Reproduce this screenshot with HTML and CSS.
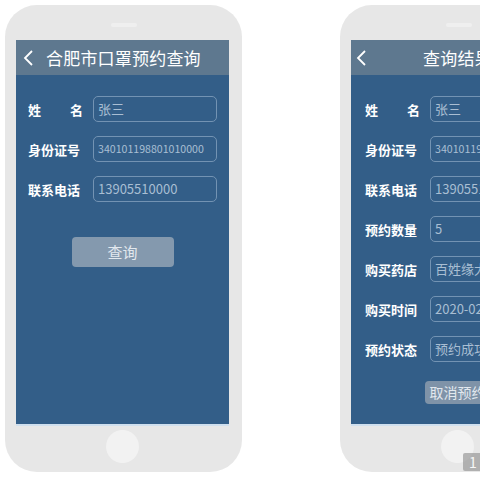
FILE: index.html
```html
<!DOCTYPE html>
<html lang="zh">
<head>
<meta charset="utf-8">
<link rel="stylesheet" href="styles.css">
</head>
<body>
<div class="stage">
  <div class="phone phone-a">
    <div class="speaker"></div>
    <div class="screen">
      <div class="header">
        <svg class="back" width="12" height="18" viewBox="0 0 12 18"><polyline points="9,2 2,9 9,16" fill="none" stroke="#fff" stroke-width="1.8"/></svg>
        <span class="title">合肥市口罩预约查询</span>
      </div>
      <div class="form">
        <div class="row"><span class="label spaced">姓<span class="gap"></span>名</span><span class="field">张三</span></div>
        <div class="row"><span class="label">身份证号</span><span class="field small">340101198801010000</span></div>
        <div class="row"><span class="label">联系电话</span><span class="field">13905510000</span></div>
        <div class="btn-wrap"><span class="btn">查询</span></div>
      </div>
    </div>
    <div class="home"></div>
  </div>
  <div class="phone phone-b">
    <div class="speaker"></div>
    <div class="screen">
      <div class="header center">
        <svg class="back abs" width="12" height="18" viewBox="0 0 12 18"><polyline points="9,2 2,9 9,16" fill="none" stroke="#fff" stroke-width="1.8"/></svg>
        <span class="title">查询结果</span>
      </div>
      <div class="form tight">
        <div class="row"><span class="label spaced">姓<span class="gap"></span>名</span><span class="field">张三</span></div>
        <div class="row"><span class="label">身份证号</span><span class="field small">340101198801010000</span></div>
        <div class="row"><span class="label">联系电话</span><span class="field">13905510000</span></div>
        <div class="row"><span class="label">预约数量</span><span class="field">5</span></div>
        <div class="row"><span class="label">购买药店</span><span class="field">百姓缘大药房</span></div>
        <div class="row"><span class="label">购买时间</span><span class="field">2020-02-10</span></div>
        <div class="row"><span class="label">预约状态</span><span class="field">预约成功</span></div>
        <div class="btn-wrap small-btn"><span class="btn">取消预约</span></div>
      </div>
    </div>
    <div class="home"></div>
    <div class="badge">1</div>
  </div>
</div>
</body>
</html>
```

FILE: styles.css
```css
html, body {
  margin: 0;
  padding: 0;
  width: 480px;
  height: 480px;
  overflow: hidden;
  background: #ffffff;
  font-family: "Noto Sans CJK SC", "Noto Sans", sans-serif;
}
.stage {
  display: flex;
  gap: 98px;
  padding: 5px 0 0 5px;
  width: 800px;
}
.phone {
  position: relative;
  flex: none;
  width: 237px;
  height: 467px;
  background: #e7e7e7;
  border-radius: 32px;
  box-sizing: border-box;
  padding: 35px 13px 0 11px;
  display: flex;
  flex-direction: column;
  align-items: stretch;
}
.speaker {
  position: absolute;
  top: 18px;
  left: 50%;
  width: 26px;
  height: 4px;
  margin-left: -13px;
  border-radius: 2px;
  background: #efefef;
}
.screen {
  height: 386px;
  background: #335e88;
  border-bottom: 2px solid #cfdfee;
  box-sizing: border-box;
  display: flex;
  flex-direction: column;
}
.header {
  position: relative;
  height: 35px;
  background: #5e788f;
  display: flex;
  align-items: center;
  padding-left: 7px;
  gap: 11px;
  flex: none;
}
.header.center {
  justify-content: center;
  padding-left: 0;
}
.back { flex: none; }
.back.abs {
  position: absolute;
  left: 5px;
  top: 9px;
}
.title {
  color: #ffffff;
  font-size: 17px;
  letter-spacing: 0.2px;
  line-height: 1;
}
.form {
  display: flex;
  flex-direction: column;
  gap: 14px;
  padding: 21px 12px 0 12px;
}
.phone-b .form { padding-left: 14px; padding-right: 0; }
.row {
  display: flex;
  align-items: center;
  height: 26px;
}
.label {
  flex: none;
  width: 65px;
  color: #ffffff;
  font-size: 13px;
  font-weight: 700;
  display: flex;
}
.label.spaced { justify-content: flex-start; }
.gap { width: 29px; }
.field {
  flex: none;
  width: 124px;
  height: 26px;
  box-sizing: border-box;
  border: 1px solid #7393b3;
  border-radius: 5px;
  color: #a9bed3;
  font-size: 13px;
  line-height: 24px;
  padding-left: 4px;
  white-space: nowrap;
  overflow: hidden;
}
.phone-b .field { width: 150px; }
.field.small { font-size: 10.6px; }
.btn-wrap {
  display: flex;
  justify-content: center;
  margin-top: 21px;
  padding-right: 0;
}
.btn {
  width: 102px;
  height: 30px;
  border-radius: 4px;
  background: #8499ae;
  color: #e2e8ee;
  font-size: 15px;
  line-height: 30px;
  text-align: center;
}
.small-btn {
  margin-top: 5px;
  padding-right: 14px;
}
.small-btn .btn {
  width: 66px;
  height: 23px;
  line-height: 23px;
  font-size: 14px;
  background: #7f93a8;
}
.home {
  width: 33px;
  height: 33px;
  border-radius: 50%;
  background: #f2f2f2;
  align-self: center;
  margin-top: 4px;
}
.badge {
  position: absolute;
  left: 123px;
  top: 448px;
  width: 20px;
  height: 18px;
  background: #9a9a9a;
  color: #ffffff;
  font-size: 14px;
  line-height: 18px;
  text-align: center;
  border-radius: 2px;
  opacity: 0.7;
}
```
